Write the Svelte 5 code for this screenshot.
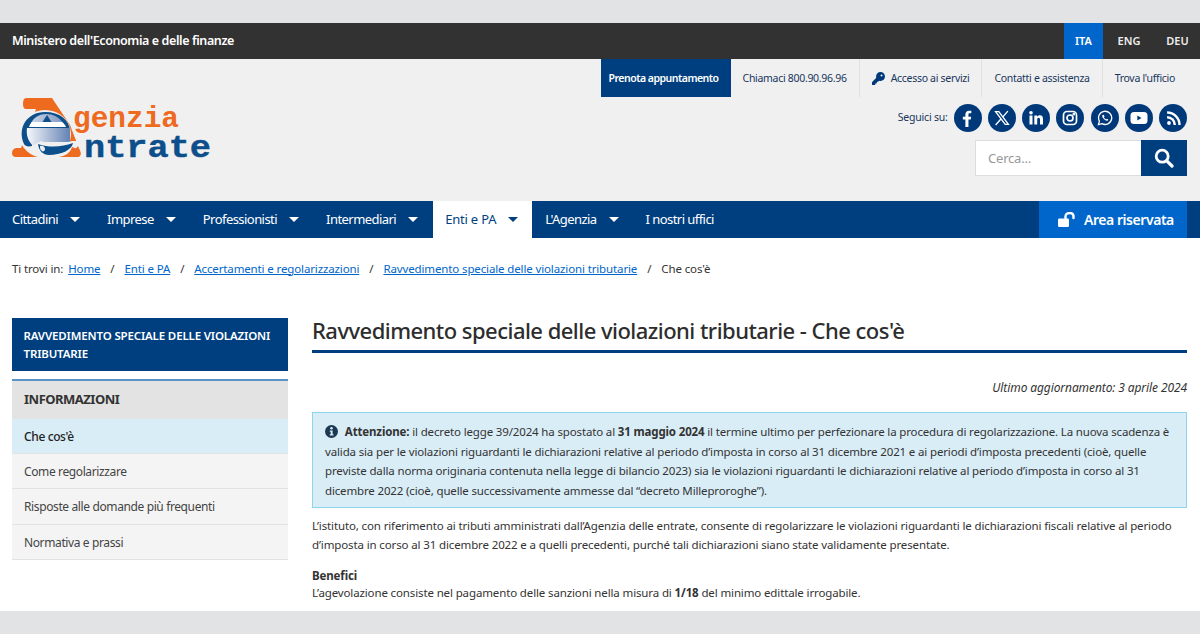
<script lang="ts">
  const langs = [
    { label: "ITA", active: true },
    { label: "ENG", active: false },
    { label: "DEU", active: false },
  ];
  const mainNav = [
    { label: "Cittadini", caret: true },
    { label: "Imprese", caret: true },
    { label: "Professionisti", caret: true },
    { label: "Intermediari", caret: true },
    { label: "Enti e PA", caret: true, active: true },
    { label: "L'Agenzia", caret: true },
    { label: "I nostri uffici", caret: false },
  ];
  const crumbs = [
    "Home",
    "Enti e PA",
    "Accertamenti e regolarizzazioni",
    "Ravvedimento speciale delle violazioni tributarie",
  ];
  const sideLinks = [
    { label: "Che cos'è", active: true },
    { label: "Come regolarizzare", active: false },
    { label: "Risposte alle domande più frequenti", active: false },
    { label: "Normativa e prassi", active: false },
  ];
</script>

<div class="page">
  <div class="strip"></div>

  <div class="topbar">
    <span class="ministry">Ministero dell'Economia e delle finanze</span>
    <div class="langs">
      {#each langs as lang}
        <span class="lang" class:is-active={lang.active}>{lang.label}</span>
      {/each}
    </div>
  </div>

  <header class="header">
    <div class="logo">
      <svg width="204" height="74" viewBox="0 0 204 74">
        <defs>
          <linearGradient id="egrad" x1="0" x2="1" y1="0" y2="0">
            <stop offset="0" stop-color="#f6f8fb" />
            <stop offset="1" stop-color="#6482b4" />
          </linearGradient>
          <linearGradient id="dome" x1="0" x2="1" y1="0" y2="0">
            <stop offset="0" stop-color="#c9d4e6" />
            <stop offset="1" stop-color="#7f99c4" />
          </linearGradient>
        </defs>
        <!-- orange pyramid -->
        <path d="M14 1H40L58 28L68 54Q70 60 65 60H4Q0 60 0 56Q0 52 4 51H9L24 12H14Q11 12 11 7Q11 1 14 1Z" fill="#ee6a1f" />
        <!-- the "e": halo, ring, dome, white strip, bar, swoosh -->
        <ellipse cx="33" cy="37" rx="26" ry="24" fill="#f0f0f0" />
        <path d="M12 47C5 31 15 15 33 15C48 15 57 23 58 33H20V49C16 50 13 49 12 47Z" fill="#0d4f8b" />
        <path d="M19 26C22 20 28 17 34 17C41 17 47 20 51 26Z" fill="url(#dome)" />
        <path d="M35 18L39.500 25H30.500Z" fill="#0d4f8b" />
        <path d="M17 30C18 27 19 26 20 25H50C52 26 53 28 54 30Z" fill="#fff" />
        <path d="M15 31H58V45H27L21 49C16 44 14 38 15 31Z" fill="url(#egrad)" />
        <path d="M21 49L29 44C38 48 50 47 60 44H69C64 56 50 61 38 61C30 61 24 57 21 49Z" fill="#f0f0f0" />
        <path d="M26 47C38 51 50 50 61 46C60 53 49 58 37 58C31 58 27 54 26 47Z" fill="#0d4f8b" />
        <path d="M28 49C31 48 33 50 33 52C33 54 31 55 30 54C28 53 28 51 28 49Z" fill="#e8edf5" />
        <path d="M60 50L68 53Q70 60 65 60H50C55 58 59 54 60 50Z" fill="#ee6a1f" />
        <text class="logo-text orange" x="61" y="30" textLength="106" lengthAdjust="spacingAndGlyphs">genzia</text>
        <text class="logo-text blue" x="72" y="60" textLength="127" lengthAdjust="spacingAndGlyphs">ntrate</text>
      </svg>
    </div>

    <div class="header-right">
      <nav class="utility">
        <a class="book">Prenota appuntamento</a>
        <a class="util">Chiamaci 800.90.96.96</a>
        <a class="util">
          <svg class="key" width="13" height="13" viewBox="0 0 512 512" fill="#00397a"><path d="M336 352c97 0 176-79 176-176S433 0 336 0 160 79 160 176c0 19 3 37 8 54L7 391c-4 4-7 10-7 17v80c0 13 11 24 24 24h80c13 0 24-11 24-24v-40h40c13 0 24-11 24-24v-40h40c6 0 12-3 17-7l33-33c17 5 35 8 54 8zm40-176a40 40 0 1 1 0-80 40 40 0 1 1 0 80z" /></svg>
          Accesso ai servizi
        </a>
        <a class="util">Contatti e assistenza</a>
        <a class="util">Trova l'ufficio</a>
      </nav>

      <div class="social">
        <span class="follow">Seguici su:</span>
        <span class="circle">
          <svg width="19" height="19" viewBox="0 0 18 18" fill="#fff"><path d="M7 17V10H4.6V7.3H7V5.2C7 2.9 8.4 1.6 10.500 1.600C11.500 1.600 12.300 1.700 12.600 1.700V4.100H11.200C10.100 4.100 9.900 4.600 9.900 5.400V7.300H12.500L12.100 10H9.900V17Z" /></svg>
        </span>
        <span class="circle">
          <svg width="16" height="16" viewBox="0 0 15 15" fill="none" stroke="#fff" stroke-width="1.250"><path d="M1.500 1.500H4.500L13.500 13.500H10.500Z" /><path d="M13 1L8.300 6.500M6.500 8.500L1.500 14" /></svg>
        </span>
        <span class="circle">
          <svg width="16" height="16" viewBox="0 0 16 16" fill="#fff"><rect x="1.500" y="5.500" width="3" height="9" /><circle cx="3" cy="2.800" r="1.800" /><path d="M6.300 5.500H9.100V6.800C9.700 5.800 10.700 5.300 11.900 5.300C14.100 5.300 15 6.700 15 9V14.500H12V9.700C12 8.500 11.600 7.800 10.600 7.800C9.600 7.800 9.200 8.600 9.200 9.700V14.500H6.300Z" /></svg>
        </span>
        <span class="circle">
          <svg width="16" height="16" viewBox="0 0 16 16" fill="none" stroke="#fff" stroke-width="1.700"><rect x="1.500" y="1.500" width="13" height="13" rx="3.500" /><circle cx="8" cy="8" r="3" /><circle cx="11.800" cy="4.200" r=".5" fill="#fff" /></svg>
        </span>
        <span class="circle">
          <svg width="16" height="16" viewBox="0 0 16 16" fill="none" stroke="#fff" stroke-width="1.300"><path d="M1.400 14.600L2.400 11.100A6.600 6.600 0 1 1 4.900 13.600Z" /><path d="M5.800 4.800C5 5.500 5 6.700 6.200 8.300C7.500 10 9 11 10.200 10.800C11 10.600 11.300 10 11.200 9.500L9.800 8.800L9.100 9.500C8.300 9.200 7.300 8.200 6.900 7.300L7.500 6.500L6.900 4.900Z" fill="#fff" stroke="none" /></svg>
        </span>
        <span class="circle">
          <svg width="18" height="14" viewBox="0 0 18 14"><rect x="0.500" y="1" width="17" height="12" rx="3.500" fill="#fff" /><path d="M7.300 4.500V9.500L11.500 7Z" fill="#00397a" /></svg>
        </span>
        <span class="circle">
          <svg width="15" height="15" viewBox="0 0 15 15" fill="none" stroke="#fff" stroke-width="2.400"><circle cx="3" cy="12" r="1.900" fill="#fff" stroke="none" /><path d="M1.100 6.200A7.700 7.700 0 0 1 8.800 13.900" /><path d="M1.100 1.500A12.400 12.400 0 0 1 13.500 13.900" /></svg>
        </span>
      </div>

      <div class="search">
        <span class="search-input">Cerca...</span>
        <span class="search-btn">
          <svg width="20" height="20" viewBox="0 0 20 20" fill="none" stroke="#fff"><circle cx="8.200" cy="8.200" r="6" stroke-width="2.800" /><path d="M12.800 12.800L18 18" stroke-width="3.200" stroke-linecap="round" /></svg>
        </span>
      </div>
    </div>
  </header>

  <nav class="mainnav">
    {#each mainNav as item}
      <a class="nav-item" class:is-active={item.active}>
        {item.label}
        {#if item.caret}<span class="caret"></span>{/if}
      </a>
    {/each}
    <a class="reserved">
      <svg width="19" height="15" viewBox="0 0 19 15" fill="#fff"><rect x="0" y="6.500" width="11" height="8.500" rx="1.200" /><path d="M7.500 7V4.500C7.500 2.300 9.300 1 11.500 1C13.700 1 15.500 2.300 15.500 4.500V6" fill="none" stroke="#fff" stroke-width="2.400" stroke-linecap="round" /></svg>
      Area riservata
    </a>
  </nav>

  <main class="content">
    <div class="breadcrumb">
      <span class="lead">Ti trovi in:</span>
      {#each crumbs as crumb}
        <a>{crumb}</a>
        <span>/</span>
      {/each}
      <span>Che cos'è</span>
    </div>

    <div class="columns">
      <aside class="sidebar">
        <div class="side-title">RAVVEDIMENTO SPECIALE DELLE VIOLAZIONI TRIBUTARIE</div>
        <div class="side-heading">INFORMAZIONI</div>
        {#each sideLinks as link}
          <a class="side-link" class:is-active={link.active}>{link.label}</a>
        {/each}
      </aside>

      <article class="article">
        <h1>Ravvedimento speciale delle violazioni tributarie - Che cos'è</h1>
        <p class="updated">Ultimo aggiornamento: 3 aprile 2024</p>
        <div class="notice">
          <svg class="info" width="13" height="13" viewBox="0 0 13 13"><circle cx="6.500" cy="6.500" r="6.500" fill="#1b3a52" /><circle cx="6.500" cy="3.300" r="1.300" fill="#d9edf7" /><path d="M4.800 5.500H7.600V9.300H8.500V10.500H4.800V9.300H5.700V6.700H4.800Z" fill="#d9edf7" /></svg>
          <strong>Attenzione:</strong> il decreto legge 39/2024 ha spostato al <strong>31 maggio 2024</strong> il termine ultimo per perfezionare la procedura di regolarizzazione. La nuova scadenza è valida sia per le violazioni riguardanti le dichiarazioni relative al periodo d’imposta in corso al 31 dicembre 2021 e ai periodi d’imposta precedenti (cioè, quelle previste dalla norma originaria contenuta nella legge di bilancio 2023) sia le violazioni riguardanti le dichiarazioni relative al periodo d’imposta in corso al 31 dicembre 2022 (cioè, quelle successivamente ammesse dal “decreto Milleproroghe”).
        </div>
        <p class="para">L’istituto, con riferimento ai tributi amministrati dall’Agenzia delle entrate, consente di regolarizzare le violazioni riguardanti le dichiarazioni fiscali relative al periodo d’imposta in corso al 31 dicembre 2022 e a quelli precedenti, purché tali dichiarazioni siano state validamente presentate.</p>
        <p class="benefit"><strong>Benefici</strong><br />L’agevolazione consiste nel pagamento delle sanzioni nella misura di <strong>1/18</strong> del minimo edittale irrogabile.</p>
      </article>
    </div>
  </main>

  <div class="strip"></div>
</div>

<style>
  :global(body) {
    margin: 0;
    background: #fff;
  }

  .page {
    height: 634px;
    overflow: hidden;
    display: flex;
    flex-direction: column;
    font-family: "Noto Sans", "Open Sans", sans-serif;
    color: #333;
  }

  .strip {
    height: 23px;
    flex: none;
    background: #e2e3e5;
  }

  .topbar {
    height: 36px;
    flex: none;
    display: flex;
    align-items: stretch;
    justify-content: space-between;
    background: #323232;
    color: #fff;
    padding-left: 12px;
  }

  .ministry {
    align-self: center;
    padding-bottom: 2px;
    font-size: 12.500px;
    font-weight: 600;
    letter-spacing: -0.4px;
  }

  .langs {
    display: flex;
  }

  .lang {
    width: 45px;
    padding-bottom: 2px;
    display: flex;
    align-items: center;
    justify-content: center;
    font-size: 11px;
    font-weight: 600;
    color: #eee;
  }

  .lang:nth-child(1) {
    width: 39px;
  }

  .lang:nth-child(2) {
    width: 52px;
  }

  .lang.is-active {
    background: #0066cc;
    color: #fff;
  }

  .header {
    height: 142px;
    flex: none;
    box-sizing: border-box;
    display: flex;
    justify-content: space-between;
    background: #f0f0f0;
    padding: 0 13px 0 12px;
  }

  .logo {
    padding-top: 38px;
  }

  .logo svg {
    display: block;
  }

  .logo-text {
    font-family: "Liberation Mono", monospace;
    font-weight: 700;
    font-size: 29px;
  }

  .orange {
    fill: #ee6a1f;
  }

  .blue {
    fill: #0d4f8b;
    stroke: #0d4f8b;
    stroke-width: 0.4px;
    font-size: 31px;
  }

  .header-right {
    display: flex;
    flex-direction: column;
    align-items: flex-end;
  }

  .utility {
    display: flex;
    height: 38px;
    font-size: 10.500px;
    letter-spacing: -0.3px;
    color: #17375e;
  }

  .book {
    display: flex;
    align-items: center;
    padding: 0 12px 0 8px;
    background: #003f7f;
    color: #fff;
    font-weight: 600;
    letter-spacing: -0.5px;
  }

  .util {
    display: flex;
    align-items: center;
    gap: 6px;
    padding: 0 12px;
    border-right: 1px solid #e0e0e0;
  }

  .util:last-child {
    border-right: 0;
  }

  .social {
    display: flex;
    align-items: center;
    gap: 6.200px;
    margin-top: 7px;
  }

  .follow {
    font-size: 10.500px;
    letter-spacing: -0.2px;
    color: #17375e;
    margin-top: -2px;
  }

  .circle {
    width: 28px;
    height: 28px;
    border-radius: 50%;
    background: #00397a;
    display: flex;
    align-items: center;
    justify-content: center;
  }

  .search {
    display: flex;
    margin-top: 8px;
    height: 36px;
  }

  .search-input {
    width: 166px;
    box-sizing: border-box;
    background: #fff;
    border: 1px solid #ddd;
    border-right: 0;
    padding-left: 12px;
    display: flex;
    align-items: center;
    font-size: 13px;
    letter-spacing: -0.2px;
    color: #999;
  }

  .search-btn {
    width: 46px;
    background: #003f7f;
    display: flex;
    align-items: center;
    justify-content: center;
  }

  .mainnav {
    height: 37px;
    flex: none;
    display: flex;
    align-items: stretch;
    background: #003f7f;
    padding: 0 13px 0 0;
    color: #fff;
    font-size: 13px;
    letter-spacing: -0.55px;
  }

  .nav-item {
    display: flex;
    align-items: center;
    gap: 12px;
    padding: 0 14px 1px 12px;
    margin-right: 1px;
  }

  .nav-item.is-active {
    background: #fff;
    color: #003f7f;
    letter-spacing: -0.2px;
  }

  .caret {
    width: 0;
    height: 0;
    border-left: 5px solid transparent;
    border-right: 5px solid transparent;
    border-top: 5px solid currentColor;
  }

  .reserved {
    margin-left: auto;
    width: 148px;
    box-sizing: border-box;
    display: flex;
    align-items: center;
    gap: 7px;
    padding: 0 0 1px 19px;
    background: #0066cc;
    font-size: 14px;
    font-weight: 600;
    letter-spacing: -0.45px;
  }

  .content {
    flex: 1;
    min-height: 0;
    background: #fff;
    padding: 0 13px 0 12px;
  }

  .breadcrumb {
    display: flex;
    gap: 10px;
    margin-top: 21px;
    height: 18px;
    align-items: center;
    font-size: 11.500px;
    letter-spacing: -0.13px;
    color: #333;
  }

  .breadcrumb a {
    color: #0066cc;
    text-decoration: underline;
  }

  .lead {
    margin-right: -5px;
  }

  .columns {
    display: grid;
    grid-template-columns: 276px 1fr;
    gap: 24px;
    margin-top: 41px;
  }

  .side-title {
    box-sizing: border-box;
    height: 53px;
    padding: 9px 11.500px;
    background: #003f7f;
    color: #fff;
    font-size: 11.500px;
    font-weight: 600;
    line-height: 18px;
    letter-spacing: -0.15px;
  }

  .side-heading {
    margin-top: 8px;
    height: 40px;
    box-sizing: border-box;
    border-top: 2px solid #5b92c8;
    background: #e3e3e3;
    padding: 0 0 2px 12px;
    display: flex;
    align-items: center;
    font-size: 13px;
    font-weight: 700;
    letter-spacing: -0.5px;
    color: #333;
  }

  .side-link {
    display: flex;
    align-items: center;
    height: 35.200px;
    box-sizing: border-box;
    padding: 1px 0 0 12px;
    background: #f4f4f4;
    border-bottom: 1px solid #e2e2e2;
    font-size: 12px;
    letter-spacing: -0.38px;
    color: #444;
  }

  .side-link.is-active {
    background: #d9edf7;
    color: #222;
    font-weight: 500;
  }

  h1 {
    margin: 0;
    height: 32px;
    border-bottom: 3px solid #003f7f;
    font-size: 22px;
    line-height: 24px;
    font-weight: 500;
    letter-spacing: -0.53px;
    color: #2d2d2d;
  }

  .updated {
    margin: 27px 0 0;
    text-align: right;
    font-size: 12px;
    font-style: italic;
    line-height: 16px;
    letter-spacing: -0.1px;
  }

  .notice {
    margin-top: 16px;
    padding: 9px 12px 7px;
    border: 1px solid #8fd4ee;
    background: #d9edf7;
    font-size: 11.500px;
    line-height: 19.500px;
    letter-spacing: -0.15px;
  }

  .info {
    vertical-align: -2px;
    margin-right: 4px;
  }

  .para {
    margin: 7.500px 0 0;
    font-size: 11.500px;
    line-height: 19px;
    letter-spacing: -0.13px;
  }

  .benefit {
    margin: 13px 0 0;
    font-size: 11.500px;
    line-height: 17px;
    letter-spacing: -0.13px;
  }
</style>
